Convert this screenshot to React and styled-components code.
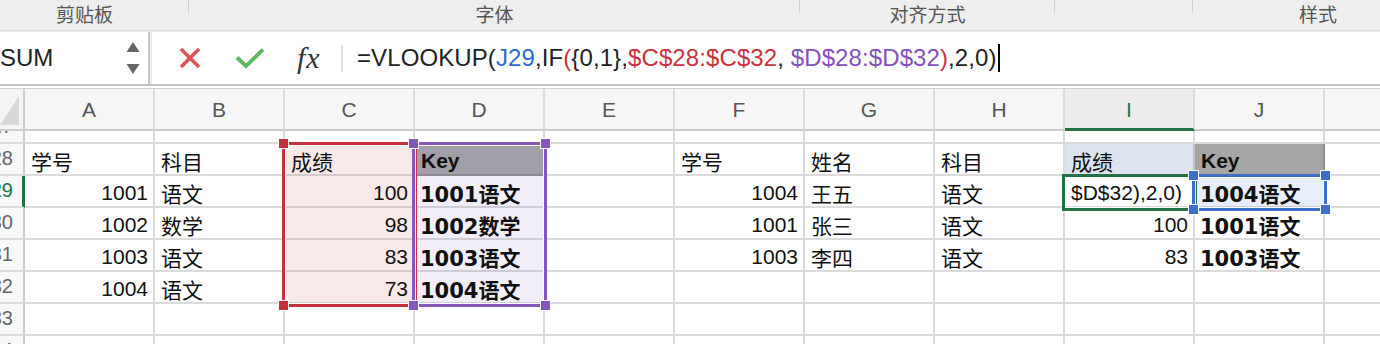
import React from "react";
import styled, { createGlobalStyle, css } from "styled-components";

const GlobalStyle = createGlobalStyle`
  html, body {
    margin: 0;
    padding: 0;
    background: #fff;
  }
  body {
    font-family: "Liberation Sans", "Noto Sans CJK SC", sans-serif;
    overflow: hidden;
  }
`;

const PINK = "#f8e9e9";
const LAVENDER = "#f2eef8";
const GREEN = "#217346";

const Page = styled.div`
  width: 1380px;
  height: 344px;
  overflow: hidden;
  background: #fff;
`;

/* ribbon group labels */
const Ribbon = styled.div`
  display: grid;
  grid-template-columns: 189px 611px 255px 138px 1fr;
  height: 31px;
  box-sizing: border-box;
  background: #eeeeee;
  border-bottom: 1px solid #dadada;
`;

const RibbonGroup = styled.div`
  position: relative;
  display: flex;
  align-items: center;
  justify-content: center;
  padding: 0 ${({ $padRight }) => $padRight || 0}px 3px ${({ $padLeft }) => $padLeft || 0}px;
  font-family: "Noto Sans CJK SC", sans-serif;
  font-size: 19px;
  color: #555;

  &::after {
    content: "";
    position: absolute;
    right: 0;
    top: 0;
    width: 1px;
    height: 13px;
    background: #d0d0d0;
  }

  &:last-child::after {
    display: none;
  }
`;

/* formula bar */
const FormulaBar = styled.div`
  display: flex;
  height: 55px;
  box-sizing: border-box;
  background: #ececec;
  border-bottom: 2px solid #c4c4c4;
  padding-top: 1px;
`;

const NameBox = styled.div`
  width: 150px;
  box-sizing: border-box;
  display: flex;
  align-items: center;
  justify-content: space-between;
  padding: 0 8px 0 0;
  background: #fff;
  border-right: 2px solid #c6c6c6;
  font-size: 24px;
  color: #222;
  margin-right: 2px;
`;

const FormulaArea = styled.div`
  flex: 1;
  display: flex;
  align-items: center;
  background: #fff;
  padding-left: 26px;
`;

const IconSlot = styled.div`
  display: flex;
  align-items: center;
  margin-right: ${({ $gap }) => $gap}px;
`;

const Fx = styled.span`
  font-family: "Liberation Serif", serif;
  font-style: italic;
  font-size: 30px;
  color: #333;
  width: 29px;
  margin-right: 15px;
  letter-spacing: 1px;
`;

const Divider = styled.div`
  width: 2px;
  height: 27px;
  background: #e0e0e0;
  margin-right: 14px;
`;

const FormulaText = styled.div`
  display: flex;
  align-items: center;
  font-size: 24px;
  color: #222;
  white-space: pre;
  letter-spacing: 0.1px;
`;

const Token = styled.span`
  color: ${({ $color }) => $color || "#222"};
`;

const Caret = styled.span`
  width: 2px;
  height: 28px;
  background: #000;
  margin-left: 1px;
`;

/* sheet */
const Sheet = styled.div`
  display: grid;
  grid-template-columns: 25px repeat(11, 130px);
  grid-template-rows: 42px 13px repeat(7, 32px);
  margin-top: 2px;
  border-top: 1px solid #cfcfcf;
`;

const Placed = css`
  grid-row: ${({ $r }) => $r};
  grid-column: ${({ $c }) => $c};
  box-sizing: border-box;
  min-width: 0;
  overflow: hidden;
`;

const Corner = styled.div`
  ${Placed};
  display: flex;
  align-items: flex-end;
  justify-content: flex-end;
  padding: 0 4px 4px 0;
  background: #f4f4f4;
  border-right: 2px solid #cdcdcd;
  border-bottom: 2px solid #cdcdcd;

  &::after {
    content: "";
    width: 20px;
    height: 29px;
    background: #d8d8d8;
    clip-path: polygon(100% 0, 100% 100%, 0 100%);
  }
`;

const ColHead = styled.div`
  ${Placed};
  display: flex;
  align-items: center;
  justify-content: center;
  background: ${({ $active }) => ($active ? "#ececec" : "#f6f6f6")};
  border-right: 2px solid #dcdcdc;
  border-bottom: ${({ $active }) => ($active ? `3px solid ${GREEN}` : "2px solid #cdcdcd")};
  font-size: 21px;
  color: ${({ $active }) => ($active ? GREEN : "#555")};
  padding-top: 2px;
`;

const RowHead = styled.div`
  ${Placed};
  display: flex;
  align-items: flex-end;
  justify-content: flex-end;
  background: #f8f8f8;
  border-right: ${({ $active }) => ($active ? `3px solid ${GREEN}` : "2px solid #cdcdcd")};
  border-bottom: 2px solid #dcdcdc;
  padding-right: ${({ $active }) => ($active ? 9 : 10)}px;
  font-size: 20px;
  color: ${({ $active }) => ($active ? GREEN : "#666")};

  span {
    height: 32px;
    line-height: 32px;
    flex-shrink: 0;
    white-space: nowrap;
  }
`;

const Cell = styled.div`
  ${Placed};
  display: flex;
  align-items: center;
  justify-content: ${({ $num }) => ($num ? "flex-end" : "flex-start")};
  padding: 3px 5px 0 6px;
  background: ${({ $bg }) => $bg || "#fff"};
  border-right: 2px solid rgba(0, 0, 0, 0.14);
  border-bottom: 2px solid rgba(0, 0, 0, 0.14);
  font-size: 21px;
  color: #111;
  white-space: nowrap;

  ${({ $bold }) =>
    $bold &&
    css`
      font-weight: 700;
    `}

  ${({ $wide }) =>
    $wide &&
    css`
      font-family: "DejaVu Sans", "Noto Sans CJK SC", sans-serif;
      font-weight: 700;
      padding-left: 5px;
    `}
`;

/* range frames lying over the cells */
const Range = styled.div`
  grid-row: ${({ $r }) => $r} / span ${({ $h }) => $h || 1};
  grid-column: ${({ $c }) => $c} / span ${({ $w }) => $w || 1};
  position: relative;
  z-index: ${({ $z }) => $z};
  pointer-events: none;
`;

const Frame = styled.div`
  position: absolute;
  inset: -2px -2px -3px -3px;
  border: 3px solid ${({ $color }) => $color};
  box-shadow: inset 0 0 0 1px rgba(255, 255, 255, 0.9);
`;

const Handle = styled.span`
  position: absolute;
  width: 9px;
  height: 9px;
  background: ${({ $color }) => $color};
  border: 1px solid #fff;
  ${({ $pos }) => ($pos.includes("t") ? "top: -7px;" : "bottom: -7px;")}
  ${({ $pos }) => ($pos.includes("l") ? "left: -7px;" : "right: -7px;")}
`;

const EditCell = styled.div`
  ${Placed};
  display: flex;
  align-items: center;
  padding: 3px 4px 0 6px;
  background: #fff;
  font-size: 21px;
  color: #111;
  white-space: nowrap;
  border-right: 2px solid rgba(0, 0, 0, 0.14);
  border-bottom: 2px solid rgba(0, 0, 0, 0.14);
`;

const COLS = ["A", "B", "C", "D", "E", "F", "G", "H", "I", "J", "K"];
const ROWS = [27, 28, 29, 30, 31, 32, 33, 34];

const data = {
  A28: { v: "学号" },
  B28: { v: "科目" },
  C28: { v: "成绩", bg: PINK },
  D28: { v: "Key", bold: true, bg: "#a39fa9" },
  F28: { v: "学号" },
  G28: { v: "姓名" },
  H28: { v: "科目" },
  I28: { v: "成绩", bg: "#dbe3f0" },
  J28: { v: "Key", bold: true, bg: "#a6a6a6" },

  A29: { v: "1001", num: true },
  B29: { v: "语文" },
  C29: { v: "100", num: true, bg: PINK },
  D29: { v: "1001语文", wide: true, bg: LAVENDER },
  F29: { v: "1004", num: true },
  G29: { v: "王五" },
  H29: { v: "语文" },
  J29: { v: "1004语文", wide: true, bg: "#e8eef9" },

  A30: { v: "1002", num: true },
  B30: { v: "数学" },
  C30: { v: "98", num: true, bg: PINK },
  D30: { v: "1002数学", wide: true, bg: LAVENDER },
  F30: { v: "1001", num: true },
  G30: { v: "张三" },
  H30: { v: "语文" },
  I30: { v: "100", num: true },
  J30: { v: "1001语文", wide: true },

  A31: { v: "1003", num: true },
  B31: { v: "语文" },
  C31: { v: "83", num: true, bg: PINK },
  D31: { v: "1003语文", wide: true, bg: LAVENDER },
  F31: { v: "1003", num: true },
  G31: { v: "李四" },
  H31: { v: "语文" },
  I31: { v: "83", num: true },
  J31: { v: "1003语文", wide: true },

  A32: { v: "1004", num: true },
  B32: { v: "语文" },
  C32: { v: "73", num: true, bg: PINK },
  D32: { v: "1004语文", wide: true, bg: LAVENDER },
};

const formula = [
  ["=VLOOKUP("],
  ["J29", "#2c6bd0"],
  [",IF"],
  ["(", "#c8333d"],
  ["{0,1},"],
  ["$C$28:$C$32", "#c8333d"],
  [", "],
  ["$D$28:$D$32", "#8650c0"],
  [")", "#c8333d"],
  [",2,0)"],
];

const Spinner = () => (
  <svg width="14" height="36" viewBox="0 0 14 36">
    <polygon points="7,2 13.5,12 0.5,12" fill="#666" />
    <polygon points="0.5,24 13.5,24 7,34" fill="#666" />
  </svg>
);

const CancelIcon = () => (
  <svg width="24" height="22" viewBox="0 0 24 22">
    <path d="M3 2 L21 20 M21 2 L3 20" stroke="#e05455" strokeWidth="3.6" />
  </svg>
);

const CheckIcon = () => (
  <svg width="30" height="22" viewBox="0 0 30 22">
    <path d="M2 10.5 L11 19 L28 2.5" stroke="#5cb85c" strokeWidth="3.8" fill="none" />
  </svg>
);

const RangeBox = ({ r, c, h, w, z, color, corners = [] }) => (
  <Range $r={r} $c={c} $h={h} $w={w} $z={z}>
    <Frame $color={color}>
      {corners.map((pos) => (
        <Handle key={pos} $pos={pos} $color={color} />
      ))}
    </Frame>
  </Range>
);

export default function App() {
  const rowLine = (row) => ROWS.indexOf(row) + 2;
  const colLine = (col) => COLS.indexOf(col) + 2;

  return (
    <Page>
      <GlobalStyle />
      <Ribbon>
        <RibbonGroup $padRight={20}>剪贴板</RibbonGroup>
        <RibbonGroup>字体</RibbonGroup>
        <RibbonGroup>对齐方式</RibbonGroup>
        <RibbonGroup />
        <RibbonGroup $padLeft={63}>样式</RibbonGroup>
      </Ribbon>

      <FormulaBar>
        <NameBox>
          <span>SUM</span>
          <Spinner />
        </NameBox>
        <FormulaArea>
          <IconSlot $gap={33}>
            <CancelIcon />
          </IconSlot>
          <IconSlot $gap={32}>
            <CheckIcon />
          </IconSlot>
          <Fx>fx</Fx>
          <Divider />
          <FormulaText>
            {formula.map(([text, color], i) => (
              <Token key={i} $color={color}>
                {text}
              </Token>
            ))}
            <Caret />
          </FormulaText>
        </FormulaArea>
      </FormulaBar>

      <Sheet>
        <Corner $r={1} $c={1} />
        {COLS.map((col) => (
          <ColHead key={col} $r={1} $c={colLine(col)} $active={col === "I"}>
            {col}
          </ColHead>
        ))}

        {ROWS.map((row) => (
          <React.Fragment key={row}>
            <RowHead $r={rowLine(row)} $c={1} $active={row === 29}>
              <span>{row}</span>
            </RowHead>
            {COLS.map((col) => {
              const key = `${col}${row}`;
              if (key === "I29") {
                return (
                  <EditCell key={key} $r={rowLine(row)} $c={colLine(col)}>
                    $D$32),2,0)
                  </EditCell>
                );
              }
              const cell = data[key] || {};
              return (
                <Cell
                  key={key}
                  $r={rowLine(row)}
                  $c={colLine(col)}
                  $num={cell.num}
                  $bold={cell.bold}
                  $wide={cell.wide}
                  $bg={cell.bg}
                >
                  {cell.v}
                </Cell>
              );
            })}
          </React.Fragment>
        ))}

        <RangeBox r={rowLine(28)} c={colLine("C")} h={5} z={2} color="#c5303d" corners={["tl", "bl"]} />
        <RangeBox r={rowLine(28)} c={colLine("D")} h={5} z={3} color="#8656bd" corners={["tl", "tr", "bl", "br"]} />
        <RangeBox r={rowLine(29)} c={colLine("I")} z={4} color={GREEN} />
        <RangeBox r={rowLine(29)} c={colLine("J")} z={5} color="#3b6fc9" corners={["tl", "tr", "bl", "br"]} />
      </Sheet>
    </Page>
  );
}
